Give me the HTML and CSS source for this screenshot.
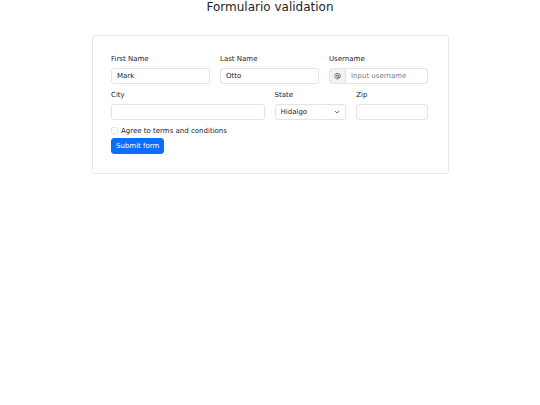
FILE: index.html
```html
<!DOCTYPE html>
<html lang="es">
<head>
<meta charset="utf-8">
<title>Formulario validation</title>
<link rel="stylesheet" href="styles.css">
</head>
<body>
<h1 class="title">Formulario validation</h1>
<div class="card">
  <form class="form">
    <div class="col-4">
      <label class="label" for="fn">First Name</label>
      <input class="control" id="fn" type="text" value="Mark">
    </div>
    <div class="col-4">
      <label class="label" for="ln">Last Name</label>
      <input class="control" id="ln" type="text" value="Otto">
    </div>
    <div class="col-4">
      <label class="label" for="un">Username</label>
      <div class="group">
        <span class="addon">@</span>
        <input class="control group-input" id="un" type="text" placeholder="Input username">
      </div>
    </div>
    <div class="col-6 row2">
      <label class="label" for="city">City</label>
      <input class="control" id="city" type="text">
    </div>
    <div class="col-3 row2">
      <label class="label" for="state">State</label>
      <select class="control select" id="state">
        <option>Hidalgo</option>
      </select>
    </div>
    <div class="col-3 row2">
      <label class="label" for="zip">Zip</label>
      <input class="control" id="zip" type="text">
    </div>
    <div class="col-12 check-row">
      <span class="checkbox"></span>
      <span class="check-label">Agree to terms and conditions</span>
    </div>
    <div class="col-12 btn-row">
      <button class="btn" type="button">Submit form</button>
    </div>
  </form>
</div>
</body>
</html>
```
FILE: styles.css
```css
* { box-sizing: border-box; }
html, body {
  margin: 0;
  padding: 0;
  background: #fff;
}
body {
  font-family: "DejaVu Sans", sans-serif;
  font-size: 7px;
  color: #212529;
  line-height: 1.5;
}
.title {
  margin: 0;
  font-size: 12px;
  font-weight: 400;
  line-height: 14px;
  text-align: center;
  color: #212529;
}
.card {
  width: 357px;
  margin: 21px auto 0;
  border: 1px solid #e6e8eb;
  border-radius: 3px;
  padding: 18px 19.5px 19px 18.5px;
}
.form {
  display: grid;
  grid-template-columns: repeat(12, 1fr);
  column-gap: 10px;
  margin: 0;
}
.col-4 { grid-column: span 4; display: flex; flex-direction: column; }
.col-6 { grid-column: span 6; display: flex; flex-direction: column; }
.col-3 { grid-column: span 3; display: flex; flex-direction: column; }
.col-12 { grid-column: span 12; }
.row2 { margin-top: 6px; }
.label {
  display: block;
  line-height: 10.5px;
  margin-bottom: 3.5px;
}
.control {
  display: block;
  width: 100%;
  height: 16px;
  margin: 0;
  padding: 0 5px;
  font-family: inherit;
  font-size: 7px;
  color: #212529;
  background: #fff;
  border: 1px solid #e2e5e8;
  border-radius: 3px;
  outline: none;
}
.control::placeholder { color: #7b8188; }
.group {
  display: flex;
  width: 100%;
}
.addon {
  display: flex;
  align-items: center;
  justify-content: center;
  width: 17px;
  height: 16px;
  flex: none;
  background: #f1f2f4;
  border: 1px solid #e2e5e8;
  border-radius: 3px 0 0 3px;
  color: #212529;
}
.group-input {
  flex: 1;
  min-width: 0;
  border-left: none;
  border-radius: 0 3px 3px 0;
}
.select {
  appearance: none;
  -webkit-appearance: none;
  padding-right: 12px;
  background-image: url("data:image/svg+xml,%3Csvg xmlns='http://www.w3.org/2000/svg' viewBox='0 0 8 8'%3E%3Cpath d='M1.5 3l2.5 2.5L6.5 3' fill='none' stroke='%23343a40' stroke-width='1' stroke-linecap='round' stroke-linejoin='round'/%3E%3C/svg%3E");
  background-repeat: no-repeat;
  background-position: right 5px center;
  background-size: 6px 6px;
}
.check-row {
  display: flex;
  align-items: center;
  margin-top: 5.5px;
  height: 10.5px;
}
.checkbox {
  width: 7px;
  height: 7px;
  border: 1px solid #e2e5e8;
  border-radius: 1.5px;
  background: #fff;
  margin-right: 3px;
  flex: none;
}
.check-label { line-height: 10.5px; }
.btn-row { margin-top: 2px; }
.btn {
  display: inline-block;
  height: 16px;
  padding: 0 4px;
  font-family: inherit;
  font-size: 7px;
  line-height: 14px;
  color: #fff;
  background: #0d6efd;
  border: 1px solid #0d6efd;
  border-radius: 3px;
  cursor: pointer;
}
```
